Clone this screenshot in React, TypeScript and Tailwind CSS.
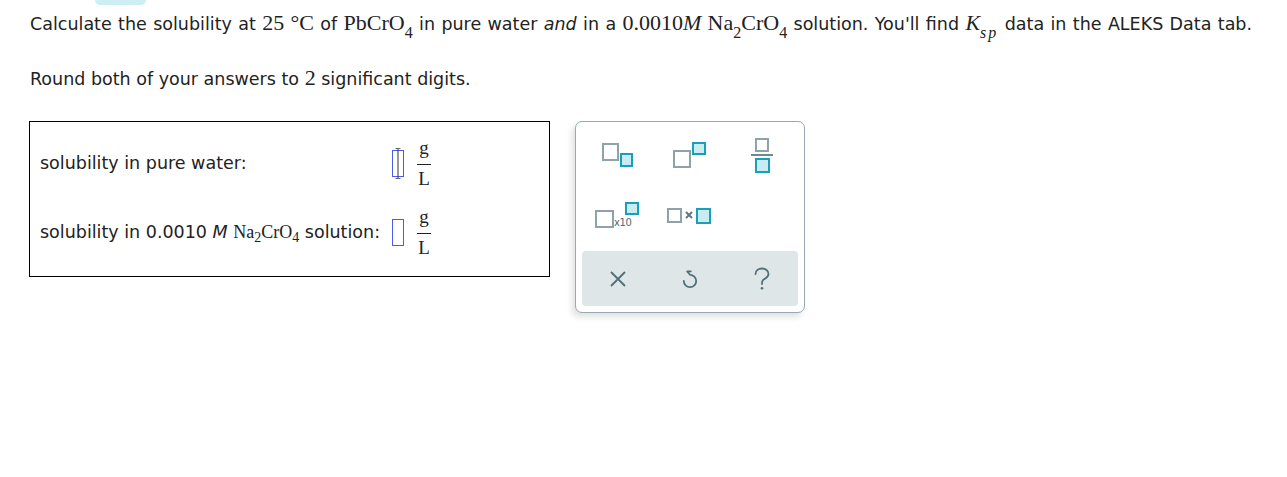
import React from 'react'

const serif = "font-['Liberation_Serif',serif]"

function Sub({ children }: { children: React.ReactNode }) {
  return <span className="relative top-[8px] text-[16px]">{children}</span>
}

function Fraction() {
  return (
    <span className={`${serif} ml-[13px] inline-flex flex-col items-center text-[19px] leading-[19px] text-[#222]`}>
      <span className="pb-[7px]">g</span>
      <span className="h-px w-[14px] bg-[#222]" />
      <span className="pt-[4px]">L</span>
    </span>
  )
}

function AnswerInput({ active }: { active?: boolean }) {
  return (
    <span className="relative inline-block h-[27px] w-[12px] border border-[#4a5cf0] bg-white">
      {active && (
        <>
          <span className="absolute left-1/2 top-[-3px] h-[31px] w-px -translate-x-1/2 bg-[#333]" />
          <span className="absolute left-1/2 top-[-3px] h-px w-[5px] -translate-x-1/2 bg-[#666]" />
          <span className="absolute bottom-[-3px] left-1/2 h-px w-[5px] -translate-x-1/2 bg-[#666]" />
        </>
      )}
    </span>
  )
}

const gray = '#8ea2aa'
const teal = '#1a9fb8'
const tealFill = '#c9ecf2'

function SubscriptIcon() {
  return (
    <svg width="32" height="26" viewBox="0 0 32 26">
      <rect x="1" y="1" width="15" height="16" fill="white" stroke={gray} strokeWidth="2" />
      <rect x="19" y="11" width="11" height="12" fill={tealFill} stroke={teal} strokeWidth="2" />
    </svg>
  )
}

function SuperscriptIcon() {
  return (
    <svg width="34" height="28" viewBox="0 0 34 28">
      <rect x="1" y="9" width="16" height="16" fill="white" stroke={gray} strokeWidth="2" />
      <rect x="20" y="1" width="12" height="11" fill={tealFill} stroke={teal} strokeWidth="2" />
    </svg>
  )
}

function FractionIcon() {
  return (
    <svg width="24" height="36" viewBox="0 0 24 36">
      <rect x="6" y="1" width="12" height="12" fill="white" stroke={gray} strokeWidth="2" />
      <line x1="1" y1="17" x2="23" y2="17" stroke="#6f878f" strokeWidth="2" />
      <rect x="6" y="21" width="13" height="13" fill={tealFill} stroke={teal} strokeWidth="2" />
    </svg>
  )
}

function TimesTenIcon() {
  return (
    <svg width="46" height="28" viewBox="0 0 46 28">
      <rect x="1" y="9" width="17" height="16" fill="white" stroke={gray} strokeWidth="2" />
      <text x="19" y="24" fontSize="10" letterSpacing="-0.4" fill="#4f6a73" fontFamily="DejaVu Sans, sans-serif">
        x10
      </text>
      <rect x="31" y="1" width="12" height="11" fill={tealFill} stroke={teal} strokeWidth="2" />
    </svg>
  )
}

function TimesIcon() {
  return (
    <svg width="46" height="18" viewBox="0 0 46 18">
      <rect x="1" y="2" width="13" height="13" fill="white" stroke={gray} strokeWidth="2" />
      <path d="M19 5 L25 11 M25 5 L19 11" stroke="#5f7880" strokeWidth="2" />
      <rect x="30" y="2" width="13" height="14" fill={tealFill} stroke={teal} strokeWidth="2" />
    </svg>
  )
}

const iconStroke = '#4f7079'

function ClearIcon() {
  return (
    <svg width="18" height="16" viewBox="0 0 18 16">
      <path d="M2 1 L16 15 M16 1 L2 15" stroke={iconStroke} strokeWidth="1.8" fill="none" />
    </svg>
  )
}

function UndoIcon() {
  return (
    <svg width="16" height="20" viewBox="0 0 16 20">
      <path
        d="M8.8 2.4 L5.2 2.4 L8 5.8 A6.2 6.2 0 1 1 1.8 12"
        stroke={iconStroke}
        strokeWidth="1.8"
        fill="none"
        strokeLinecap="round"
        strokeLinejoin="round"
      />
    </svg>
  )
}

function HelpIcon() {
  return (
    <svg width="18" height="24" viewBox="0 0 18 24">
      <path
        d="M2.5 7 C2.5 3.5 5.5 1.5 9 1.5 C12.5 1.5 15.5 3.8 15.5 7 C15.5 10.5 12 11.5 10 13 C9 13.8 9 15 9 17"
        stroke={iconStroke}
        strokeWidth="1.8"
        fill="none"
        strokeLinecap="round"
      />
      <circle cx="9" cy="21.3" r="1.3" fill={iconStroke} />
    </svg>
  )
}

function Keypad() {
  const top = [SubscriptIcon, SuperscriptIcon, FractionIcon, TimesTenIcon, TimesIcon]
  const bottom = [ClearIcon, UndoIcon, HelpIcon]

  return (
    <div className="flex w-[230px] flex-col rounded-[7px] border border-[#95a9b0] bg-white px-[6px] pb-[6px] shadow-[-3px_4px_6px_rgba(0,0,0,0.12)]">
      <div className="grid h-[129px] grid-cols-3 grid-rows-[60px_60px] pt-[4px]">
        {top.map((Icon, i) => (
          <button key={i} className="flex items-center justify-center">
            <Icon />
          </button>
        ))}
      </div>
      <div className="grid h-[55px] grid-cols-3 rounded-[4px] bg-[#dfe6e8]">
        {bottom.map((Icon, i) => (
          <button key={i} className="flex items-center justify-center">
            <Icon />
          </button>
        ))}
      </div>
    </div>
  )
}

export default function App() {
  return (
    <div className="min-h-[477px] bg-white px-[30px] font-['DejaVu_Sans',sans-serif] text-[17.5px] text-[#222]">
      <div className="ml-[65px] h-[5px] w-[51px] rounded-b-[8px] bg-[#cdeef2]" />

      <p className="mt-[7px] h-[22px] whitespace-nowrap leading-[22px] [word-spacing:0.8px]">
        Calculate the solubility at <span className={`${serif} text-[22px]`}>25 °C</span> of{' '}
        <span className={`${serif} text-[22px]`}>
          PbCrO<Sub>4</Sub>
        </span>{' '}
        in pure water <i>and</i> in a{' '}
        <span className={`${serif} text-[22px]`}>
          0.0010<i>M</i> Na<Sub>2</Sub>CrO<Sub>4</Sub>
        </span>{' '}
        solution. You'll find{' '}
        <span className={`${serif} text-[22px]`}>
          <i>K</i>
          <Sub>
            <i className="tracking-[2px]">sp</i>
          </Sub>
        </span>{' '}
        data in the ALEKS Data tab.
      </p>

      <p className="mt-[33px] h-[22px] leading-[22px]">
        Round both of your answers to <span className={`${serif} text-[22px]`}>2</span> significant digits.
      </p>

      <div className="mt-[32px] flex items-start gap-[25px]">
        <div className="ml-[-1px] grid h-[156px] w-[521px] grid-cols-[auto_1fr] content-start items-center border border-black pl-[10px]">
          <div className="mt-[16px] flex h-[50px] items-center">solubility in pure water:</div>
          <div className="mt-[16px] flex h-[50px] items-center pl-[12px]">
            <AnswerInput active />
            <Fraction />
          </div>
          <div className="mt-[19px] flex h-[50px] items-center whitespace-nowrap">
            solubility in 0.0010&nbsp;<i>M</i>&nbsp;
            <span className={`${serif} text-[18px]`}>
              Na<span className="relative top-[4px] text-[14px]">2</span>CrO
              <span className="relative top-[4px] text-[14px]">4</span>
            </span>
            &nbsp;solution:
          </div>
          <div className="mt-[19px] flex h-[50px] items-center pl-[12px]">
            <AnswerInput />
            <Fraction />
          </div>
        </div>

        <Keypad />
      </div>
    </div>
  )
}
